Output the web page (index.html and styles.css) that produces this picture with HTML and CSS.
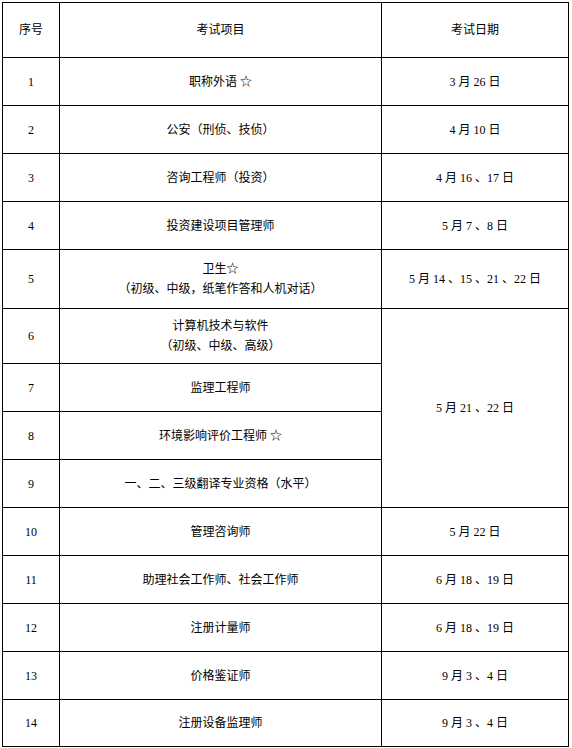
FILE: index.html
```html
<!DOCTYPE html>
<html lang="zh-CN">
<head>
<meta charset="utf-8">
<title>考试日期</title>
<link rel="stylesheet" href="styles.css">
</head>
<body>
<table class="exam">
  <colgroup>
    <col class="c-no">
    <col class="c-item">
    <col class="c-date">
  </colgroup>
  <tr class="r-head"><td>序号</td><td>考试项目</td><td>考试日期</td></tr>
  <tr class="r48"><td>1</td><td>职称外语 ☆</td><td>3 月 26 日</td></tr>
  <tr class="r48"><td>2</td><td>公安（刑侦、技侦）</td><td>4 月 10 日</td></tr>
  <tr class="r48"><td>3</td><td>咨询工程师（投资）</td><td>4 月 16 、17 日</td></tr>
  <tr class="r48"><td>4</td><td>投资建设项目管理师</td><td>5 月 7 、8 日</td></tr>
  <tr class="r59"><td>5</td><td>卫生☆<br>（初级、中级，纸笔作答和人机对话）</td><td>5 月 14 、15 、21 、22 日</td></tr>
  <tr class="r55"><td>6</td><td>计算机技术与软件<br>（初级、中级、高级）</td><td rowspan="4">5 月 21 、22 日</td></tr>
  <tr class="r48"><td>7</td><td>监理工程师</td></tr>
  <tr class="r48"><td>8</td><td>环境影响评价工程师 ☆</td></tr>
  <tr class="r48"><td>9</td><td>一、二、三级翻译专业资格（水平）</td></tr>
  <tr class="r48"><td>10</td><td>管理咨询师</td><td>5 月 22 日</td></tr>
  <tr class="r48"><td>11</td><td>助理社会工作师、社会工作师</td><td>6 月 18 、19 日</td></tr>
  <tr class="r48"><td>12</td><td>注册计量师</td><td>6 月 18 、19 日</td></tr>
  <tr class="r48"><td>13</td><td>价格鉴证师</td><td>9 月 3 、4 日</td></tr>
  <tr class="r47"><td>14</td><td>注册设备监理师</td><td>9 月 3 、4 日</td></tr>
</table>
</body>
</html>
```

FILE: styles.css
```css
html, body {
  margin: 0;
  padding: 0;
  background: #fff;
}

body {
  padding: 2px 0 0 2px;
  font-family: "Liberation Serif", "Noto Sans CJK SC", serif;
  font-size: 12px;
  color: #000;
}

.exam {
  border-collapse: collapse;
  table-layout: fixed;
  width: 566px;
}

.c-no { width: 57px; }
.c-item { width: 322px; }
.c-date { width: 187px; }

.exam td {
  border: 1px solid #000;
  padding: 0;
  text-align: center;
  vertical-align: middle;
  line-height: 20px;
}

.r-head { height: 55px; }
.r48 { height: 48px; }
.r59 { height: 59px; }
.r55 { height: 55px; }
.r47 { height: 47px; }
```
